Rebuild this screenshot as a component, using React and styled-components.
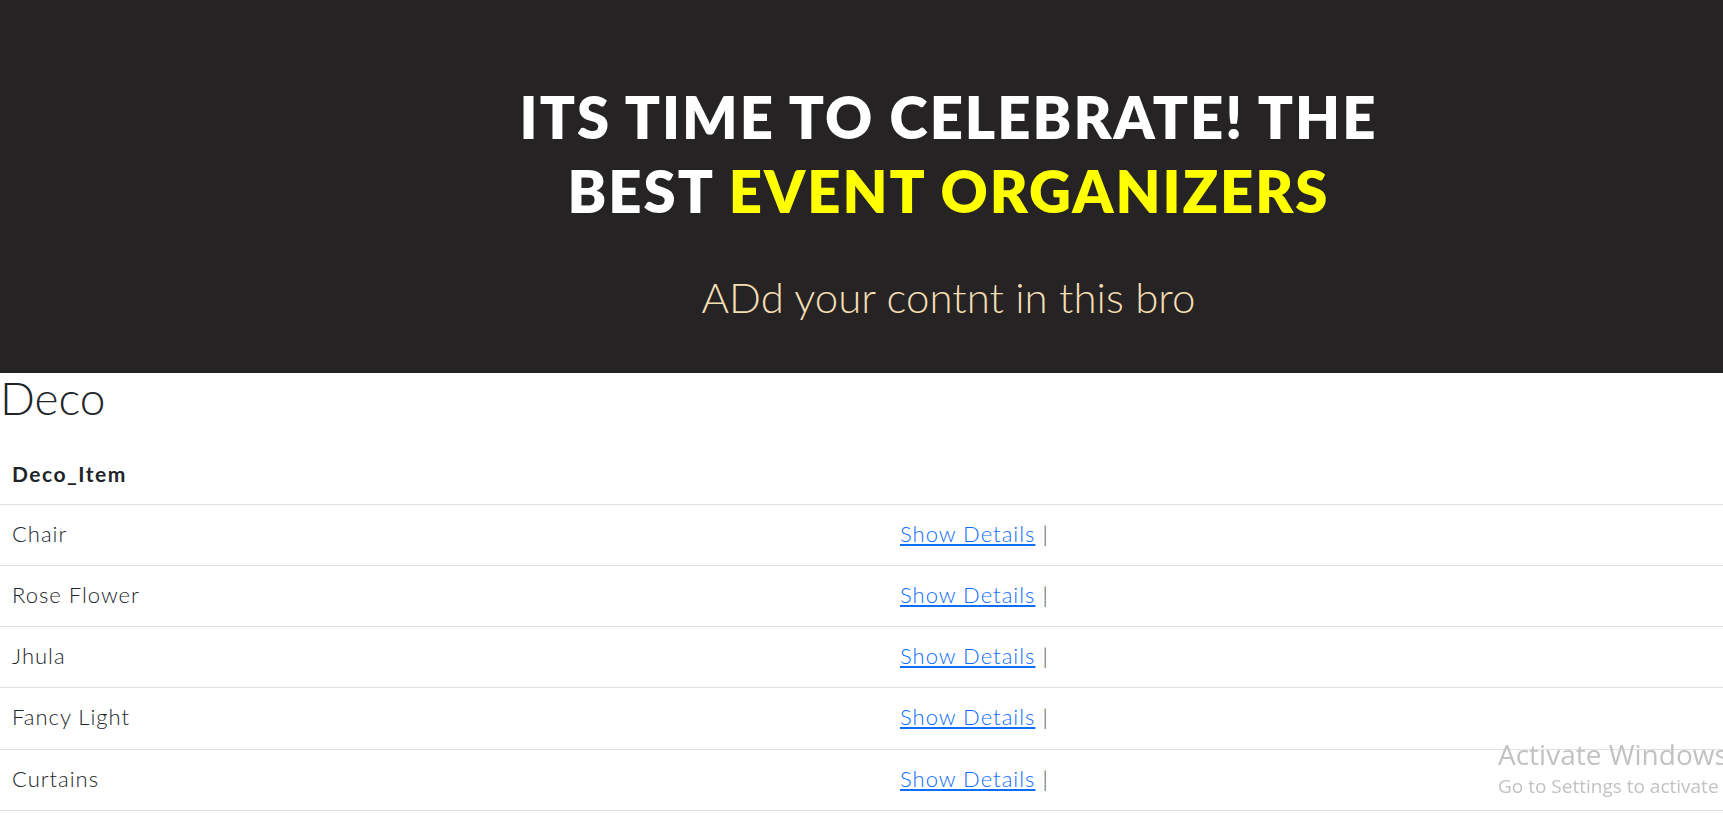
import React from 'react'
import styled, { createGlobalStyle } from 'styled-components'

const items = ['Chair', 'Rose Flower', 'Jhula', 'Fancy Light', 'Curtains']

function App() {
    return (
        <>
            <GlobalStyle />
            <Hero>
                <Headline>
                    ITS TIME TO CELEBRATE! THE<br />
                    BEST <Highlight>EVENT ORGANIZERS</Highlight>
                </Headline>
                <Tagline>ADd your contnt in this bro</Tagline>
            </Hero>

            <SectionTitle>Deco</SectionTitle>

            <Table>
                <thead>
                    <tr>
                        <HeadCell>Deco_Item</HeadCell>
                        <HeadCell />
                    </tr>
                </thead>
                <tbody>
                    {items.map(item => (
                        <tr key={item}>
                            <Cell first>{item}</Cell>
                            <Cell>
                                <DetailsLink href="#">Show Details</DetailsLink> <Pipe>|</Pipe>
                            </Cell>
                        </tr>
                    ))}
                </tbody>
            </Table>

            <Watermark>
                <WatermarkTitle>Activate Windows</WatermarkTitle>
                <WatermarkText>Go to Settings to activate Windows.</WatermarkText>
            </Watermark>
        </>
    )
}

export default App

const GlobalStyle = createGlobalStyle`
    html, body {
        margin: 0;
        padding: 0;
        background: #fff;
        overflow: hidden;
    }
    body {
        font-family: Lato, "Open Sans", sans-serif;
        color: #212529;
    }
`

const Hero = styled.header`
    height: 373px;
    box-sizing: border-box;
    background-color: #252324;
    padding: 80px 0 0 174px;
    display: flex;
    flex-direction: column;
    align-items: center;
    text-align: center;
`

const Headline = styled.h1`
    margin: 0;
    font-family: Lato, sans-serif;
    font-weight: 800;
    font-size: 58px;
    line-height: 74px;
    letter-spacing: 2px;
    color: #fff;
`

const Highlight = styled.span`
    color: #ffff00;
`

const Tagline = styled.p`
    margin: 44px 0 0;
    font-family: Lato, sans-serif;
    font-weight: 300;
    font-size: 42px;
    line-height: 1.2;
    color: wheat;
`

const SectionTitle = styled.h1`
    margin: 0 0 19px;
    font-family: Lato, sans-serif;
    font-weight: 300;
    font-size: 46px;
    line-height: 1.1;
    color: #212529;
`

const Table = styled.table`
    width: 100%;
    border-collapse: collapse;
    font-family: Lato, sans-serif;
`

const HeadCell = styled.th`
    text-align: left;
    padding: 14px 12px;
    font-size: 21px;
    line-height: 33px;
    font-weight: 700;
    letter-spacing: 1.5px;
    color: #212529;
    border-bottom: 1px solid #dee2e6;
`

const Cell = styled.td`
    width: ${props => (props.first ? '864px' : 'auto')};
    padding: 13px 12px 15px;
    font-size: 22px;
    line-height: 32.3px;
    font-weight: 300;
    letter-spacing: 1px;
    color: #212529;
    border-bottom: 1px solid #dee2e6;
`

const DetailsLink = styled.a`
    color: #0d6efd;
    text-decoration: underline;
`

const Pipe = styled.span`
    color: #4a4a4a;
`

const Watermark = styled.div`
    position: fixed;
    left: 1498px;
    top: 736px;
    white-space: nowrap;
    font-family: "Open Sans", "Noto Sans", sans-serif;
    color: #c2c2c2;
    pointer-events: none;
`

const WatermarkTitle = styled.div`
    font-size: 28px;
    line-height: 37px;
`

const WatermarkText = styled.div`
    font-size: 19px;
    line-height: 26px;
`
